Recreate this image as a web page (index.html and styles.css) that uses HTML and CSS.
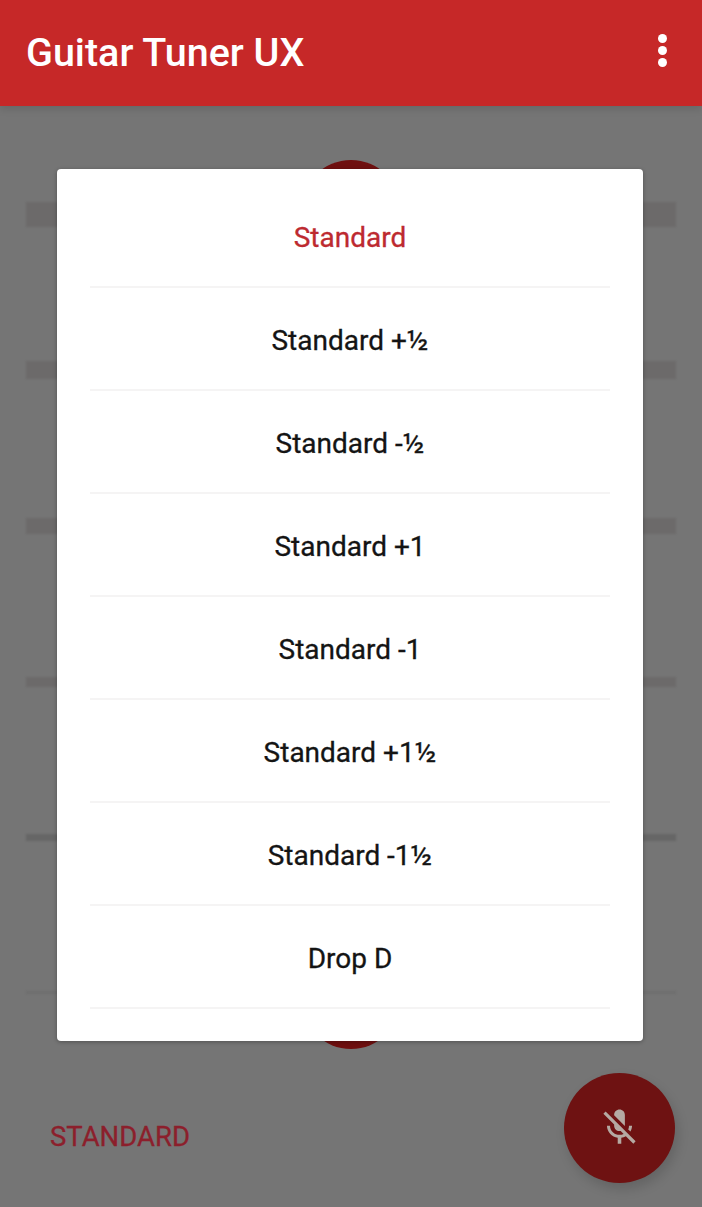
FILE: index.html
```html
<!DOCTYPE html>
<html lang="en">

<head>
    <meta charset="UTF-8">
    <meta name="viewport" content="width=device-width, initial-scale=1.0">
    <title>Guitar Tuner UX</title>
    <link rel="stylesheet" href="styles.css">
</head>

<body>
    <div class="screen">
        <header class="app-bar">
            <h1 class="app-title">Guitar Tuner UX</h1>
            <div class="overflow-menu">
                <span class="dot"></span>
                <span class="dot"></span>
                <span class="dot"></span>
            </div>
        </header>

        <main class="tuner">
            <div class="peg peg-top"></div>
            <div class="peg peg-bottom"></div>

            <div class="strings">
                <div class="string-row"><div class="string string-1"></div></div>
                <div class="string-row"><div class="string string-2"></div></div>
                <div class="string-row"><div class="string string-3"></div></div>
                <div class="string-row"><div class="string string-4"></div></div>
                <div class="string-row"><div class="string string-5"></div></div>
                <div class="string-row"><div class="string string-6"></div></div>
            </div>

            <div class="tuner-footer">
                <span class="tuning-name">STANDARD</span>
                <button class="fab" aria-label="Microphone off">
                    <svg class="fab-icon" viewBox="0 0 24 24">
                        <path d="M19 11h-1.7c0 .74-.16 1.43-.43 2.05l1.23 1.23c.56-.98.9-2.09.9-3.28zm-4.02.17c0-.06.02-.11.02-.17V5c0-1.66-1.34-3-3-3S9 3.34 9 5v.18l5.98 5.99zM4.27 3L3 4.27l6.01 6.01V11c0 1.66 1.33 3 2.99 3 .22 0 .44-.03.65-.08l1.66 1.66c-.71.33-1.5.52-2.31.52-2.76 0-5.3-2.1-5.3-5.1H5c0 3.41 2.72 6.23 6 6.72V21h2v-3.28c.91-.13 1.77-.45 2.54-.9L19.73 21 21 19.73 4.27 3z"/>
                    </svg>
                </button>
            </div>

            <ul class="tuning-dialog">
                <li class="tuning-item tuning-item-active">Standard</li>
                <li class="tuning-item">Standard +½</li>
                <li class="tuning-item">Standard -½</li>
                <li class="tuning-item">Standard +1</li>
                <li class="tuning-item">Standard -1</li>
                <li class="tuning-item">Standard +1½</li>
                <li class="tuning-item">Standard -1½</li>
                <li class="tuning-item">Drop D</li>
            </ul>
        </main>
    </div>
</body>

</html>
```

FILE: styles.css
```css
* {
    margin: 0;
    padding: 0;
    box-sizing: border-box;
}

body {
    font-family: "Roboto", sans-serif;
    background-color: #757575;
}

.screen {
    width: 702px;
    height: 1207px;
    display: flex;
    flex-direction: column;
    overflow: hidden;
}

/* App bar */
.app-bar {
    height: 106px;
    padding: 0 35px 0 26px;
    display: flex;
    align-items: center;
    justify-content: space-between;
    background-color: #c62828;
    box-shadow: 0 3px 8px rgba(0, 0, 0, 0.12);
    position: relative;
    z-index: 1;
}

.app-title {
    margin-bottom: 2px;
    font-size: 39.5px;
    font-weight: 500;
    color: #fff;
}

.overflow-menu {
    margin-bottom: 6px;
    display: flex;
    flex-direction: column;
    gap: 3px;
}

.dot {
    width: 9px;
    height: 9px;
    border-radius: 50%;
    background-color: #fff;
}

/* Tuner behind the dialog */
.tuner {
    flex: 1;
    position: relative;
    padding-top: 31px;
    background-color: #757575;
}

.string-row {
    height: 155.6px;
    padding: 0 26px;
    display: flex;
    align-items: center;
}

.string {
    width: 100%;
    background-color: #6c6a6a;
    filter: blur(1px);
}

.string-1 { height: 25px; }
.string-2 { height: 18px; }
.string-3 { height: 16px; }
.string-4 { height: 10px; }
.string-5 { height: 7px; background-color: #666; }
.string-6 { height: 3px; background-color: #6e6e6e; }

.peg {
    position: absolute;
    left: 301px;
    width: 100px;
    height: 100px;
    border-radius: 50%;
    background-color: #6f1010;
}

.peg-top {
    top: 54px;
}

.peg-bottom {
    top: 843px;
}

.tuner-footer {
    margin-top: 2px;
    padding: 0 27px 0 50px;
    display: flex;
    align-items: center;
    justify-content: space-between;
}

.tuning-name {
    margin-top: 18px;
    font-size: 27.5px;
    -webkit-text-stroke: 0.3px #8c1f2c;
    color: #8c1f2c;
}

.fab {
    width: 111px;
    height: 110px;
    border: none;
    border-radius: 50%;
    display: flex;
    align-items: center;
    justify-content: center;
    background-color: #6e1212;
    box-shadow: 3px 6px 12px rgba(0, 0, 0, 0.15);
}

.fab-icon {
    width: 43px;
    height: 43px;
    fill: #b5a9a2;
}

/* Tuning picker */
.tuning-dialog {
    position: absolute;
    top: 63px;
    left: 57px;
    width: 586px;
    height: 872px;
    padding: 16px 33px 32px;
    list-style: none;
    border-radius: 4px;
    background-color: #fff;
    box-shadow: 0 1px 4px rgba(0, 0, 0, 0.3);
}

.tuning-item {
    height: 103px;
    padding-top: 3px;
    display: flex;
    align-items: center;
    justify-content: center;
    font-size: 28px;
    color: #141414;
    -webkit-text-stroke: 0.3px;
    border-bottom: 2px solid #f5f4f4;
}

.tuning-item-active {
    color: #bd2a30;
}
```
